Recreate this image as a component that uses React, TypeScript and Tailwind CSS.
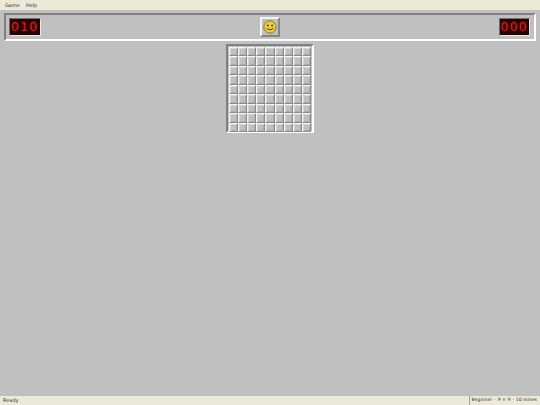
const CELLS = Array.from({ length: 81 }, (_, i) => i);

function Counter({ value }: { value: string }) {
  return (
    <div className="flex h-[18px] w-[31.5px] items-center justify-center border border-t-[#707070] border-l-[#707070] border-r-[#e8e8e8] border-b-[#e8e8e8] bg-[#240404] font-['DejaVu_Sans',sans-serif] text-[12.5px] leading-none tracking-[1.2px] text-[#dc1c14] [text-shadow:0_0_2px_#a00000]">
      {value}
    </div>
  );
}

function Smiley() {
  return (
    <svg width="14" height="14" viewBox="0 0 26 26">
      <circle cx="13" cy="13" r="11.5" fill="#eccb3c" stroke="#85752a" strokeWidth="1.8" />
      <circle cx="9" cy="10" r="1.8" fill="#4a4420" />
      <circle cx="17" cy="10" r="1.8" fill="#4a4420" />
      <path d="M7 15.500c1.500 3.500 10.500 3.500 12 0" fill="none" stroke="#4a4420" strokeWidth="1.8" strokeLinecap="round" />
    </svg>
  );
}

export default function App() {
  return (
    <div className="flex h-[405px] w-[540px] flex-col overflow-hidden bg-[#c0c0c0] font-['DejaVu_Sans',sans-serif] text-[#333333]">
      {/* Menu */}
      <div className="flex h-[10px] shrink-0 items-center gap-[6px] bg-[#ece9d8] px-[5px] text-[5px] leading-none">
        <span>Game</span>
        <span>Help</span>
      </div>

      {/* Header panel */}
      <div className="mx-[4px] mt-[3px] flex h-[28px] shrink-0 items-center justify-between border-2 border-t-[#808080] border-l-[#808080] border-r-[#ffffff] border-b-[#ffffff] pl-[3px] pr-[4px]">
        <Counter value="010" />
        <button className="flex h-[20px] w-[20px] items-center justify-center border-2 border-t-[#f4f4f4] border-l-[#f4f4f4] border-r-[#858585] border-b-[#858585] bg-[#c0c0c0]">
          <Smiley />
        </button>
        <Counter value="000" />
      </div>

      {/* Board */}
      <div className="flex flex-1 justify-center pt-[3px]">
        <div className="h-[89px] w-[88px] border-2 border-t-[#808080] border-l-[#808080] border-r-[#ffffff] border-b-[#ffffff]">
          <div className="grid grid-cols-9 p-px">
            {CELLS.map((i) => (
              <div
                key={i}
                className="h-[9.44px] border border-t-[#f4f4f4] border-l-[#f4f4f4] border-r-[#8c8c8c] border-b-[#8c8c8c] bg-[#c0c0c0] shadow-[inset_1px_1px_0_#d4d4d4,inset_-1px_-1px_0_#acacac]"
              />
            ))}
          </div>
        </div>
      </div>

      {/* Status bar */}
      <div className="flex h-[9px] shrink-0 items-center justify-between bg-[#ece9d8] pl-[3px] text-[5px] leading-none">
        <span>Ready</span>
        <div className="flex h-full items-center gap-[2px] border-l border-[#a8a698] pl-[2px] pr-[3px] text-[4.6px]">
          <span>Beginner</span>
          <span>·</span>
          <span>9 × 9</span>
          <span>·</span>
          <span>10 mines</span>
        </div>
      </div>
    </div>
  );
}
